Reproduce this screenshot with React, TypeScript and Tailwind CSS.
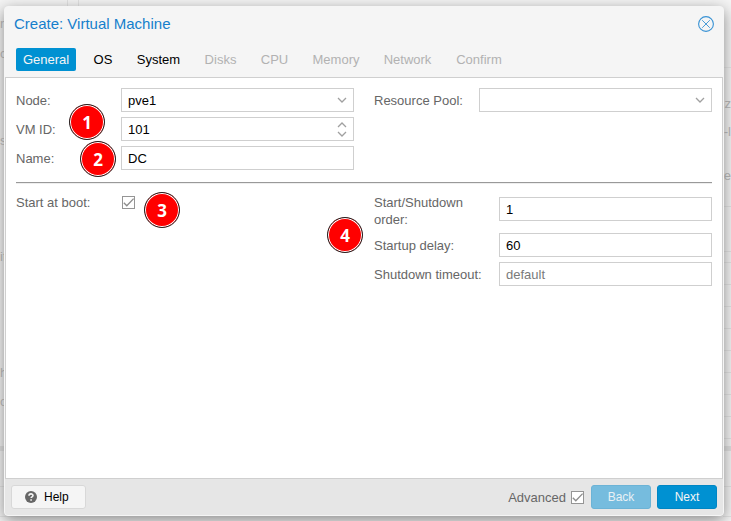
import type { ReactNode } from "react";
import { clsx } from "clsx";

const TABS = [
  { label: "General", state: "active", width: "w-[60px]" },
  { label: "OS", state: "enabled", width: "w-8" },
  { label: "System", state: "enabled", width: "w-[57px]" },
  { label: "Disks", state: "disabled", width: "w-[45px]" },
  { label: "CPU", state: "disabled", width: "w-[41px]" },
  { label: "Memory", state: "disabled", width: "w-[60px]" },
  { label: "Network", state: "disabled", width: "w-[61px]" },
  { label: "Confirm", state: "disabled", width: "w-[60px]" },
];

const FIELD = "h-6 w-full rounded-none border border-[#cfcfcf] bg-white px-1.5 text-[13px] text-black outline-none placeholder:text-[#7a7a7a]";

function Field({
  id,
  label,
  wide,
  children,
}: {
  id: string;
  label: string;
  wide?: boolean;
  children: ReactNode;
}) {
  return (
    <div className="flex items-center">
      <label
        htmlFor={id}
        className={clsx("shrink-0 self-start pt-1 leading-[17px] text-[#666]", wide ? "w-[125px] pr-3" : "w-[105px]")}
      >
        {label}
      </label>
      <div className="relative flex min-w-0 grow items-center">{children}</div>
    </div>
  );
}

function Chevron({ up }: { up?: boolean }) {
  return (
    <svg width="10" height="6" viewBox="0 0 10 6" fill="none" stroke="#a0a0a0" strokeWidth="1.3" aria-hidden="true">
      <path d={up ? "M1 5 L5 1 L9 5" : "M1 1 L5 5 L9 1"} />
    </svg>
  );
}

function SelectBox({ id, value }: { id: string; value: string }) {
  return (
    <>
      <select id={id} defaultValue={value} className={clsx(FIELD, "appearance-none pt-px")}>
        <option value={value}>{value}</option>
      </select>
      <span className="pointer-events-none absolute right-[7px]">
        <Chevron />
      </span>
    </>
  );
}

function CheckBox({ id }: { id: string }) {
  return (
    <span className="relative flex size-[13px]">
      <input
        id={id}
        type="checkbox"
        defaultChecked
        className="peer size-[13px] appearance-none border border-[#959595] bg-white"
      />
      <svg
        className="pointer-events-none absolute inset-0 hidden peer-checked:block"
        width="13"
        height="13"
        viewBox="0 0 13 13"
        fill="none"
        stroke="#8c8c8c"
        strokeWidth="1.3"
        aria-hidden="true"
      >
        <path d="M1.8 6.8 L4.8 9.8 L11.6 2.6" />
      </svg>
    </span>
  );
}

function Marker({ value, className }: { value: number; className: string }) {
  return (
    <span
      className={clsx(
        "absolute flex size-9 items-center justify-center rounded-full border border-[#222] bg-[#f00] font-['Noto_Sans',sans-serif] text-[17px] leading-none font-bold text-white shadow-[inset_0_0_0_1px_#fff]",
        className,
      )}
    >
      {value}
    </span>
  );
}

// Slice of the page behind the dialog: text rows and grid lines.
function EdgeRow({ className, children }: { className: string; children?: ReactNode }) {
  return <div className={clsx("flex items-center whitespace-nowrap", className)}>{children}</div>;
}

function Backdrop() {
  return (
    <div className="absolute inset-0 flex justify-between overflow-hidden bg-[#f5f5f5] text-[13px] text-[#b0b0b0]" aria-hidden="true">
      <div className="w-20">
        <EdgeRow className="h-[14px] w-[79px] border-r border-[#e2e2e2]">
          <span className="ml-[67px] h-full border-l border-[#e2e2e2]" />
        </EdgeRow>
        <EdgeRow className="h-5">rl</EdgeRow>
        <EdgeRow className="h-10">ca</EdgeRow>
        <EdgeRow className="mt-[57px] h-5">s</EdgeRow>
        <EdgeRow className="mt-24 h-5">it</EdgeRow>
        <EdgeRow className="mt-24 h-5">h</EdgeRow>
        <EdgeRow className="mt-[9px] h-5">or</EdgeRow>
        <EdgeRow className="mt-[34px] h-[5px] bg-[#dedede]" />
        <EdgeRow className="h-9 border-b border-[#e2e2e2]" />
        <EdgeRow className="h-[30px] border-b border-[#e2e2e2]" />
      </div>
      <div className="w-2">
        <EdgeRow className="h-[68px] border-b border-[#e6e6e6]" />
        <EdgeRow className="mt-[26px] h-5 justify-end">z</EdgeRow>
        <EdgeRow className="mt-2 h-5 justify-end">-l</EdgeRow>
        <EdgeRow className="mt-6 h-5 justify-end">e</EdgeRow>
        <EdgeRow className="h-[21px] border-b border-[#e2e2e2]" />
        <EdgeRow className="h-[45px] border-b border-[#e2e2e2]" />
        <EdgeRow className="h-[11px] border-b border-[#e2e2e2]" />
        {[0, 1, 2, 3, 4, 5, 6, 7].map((row) => (
          <EdgeRow key={row} className="h-[22px] border-b border-[#e2e2e2]" />
        ))}
        <EdgeRow className="mt-[7px] h-[5px] bg-[#dedede]" />
        <EdgeRow className="h-9 border-b border-[#e2e2e2]" />
        <EdgeRow className="h-[30px] border-b border-[#e2e2e2]" />
      </div>
    </div>
  );
}

export default function App() {
  return (
    <div className="relative flex min-h-screen pt-1.5 pr-[7px] pb-[5px] pl-1 font-['Liberation_Sans',Arial,sans-serif] text-[13px]">
      <Backdrop />

      <section
        role="dialog"
        aria-labelledby="dialog-title"
        className="relative flex min-w-0 grow flex-col rounded-[4px] border border-[#f5f5f5] bg-[#f5f5f5] shadow-[0_4px_15px_#888]"
      >
        <header className="flex h-[34px] items-center justify-between px-[9px]">
          <h1 id="dialog-title" className="text-[15px] leading-5 text-[#157fcc]">
            Create: Virtual Machine
          </h1>
          <button type="button" aria-label="Close" className="text-[#3892d4]">
            <svg width="16" height="16" viewBox="0 0 16 16" fill="none" stroke="currentColor" aria-hidden="true">
              <circle cx="8" cy="8" r="7.4" strokeWidth="1.1" />
              <path d="M4.2 4.2 L11.8 11.8 M11.8 4.2 L4.2 11.8" strokeWidth="0.9" />
            </svg>
          </button>
        </header>

        <nav className="flex gap-[11px] px-[11px] pt-[7px] pb-1.5">
          {TABS.map((tab) => (
            <button
              key={tab.label}
              type="button"
              disabled={tab.state === "disabled"}
              className={clsx(
                "h-[23px] rounded-[2px] text-center leading-[23px]",
                tab.width,
                tab.state === "active" && "bg-[#0091d2] text-[#f5f5f5]",
                tab.state === "enabled" && "text-black",
                tab.state === "disabled" && "text-[#b2b2b2]",
              )}
            >
              {tab.label}
            </button>
          ))}
        </nav>

        <form className="relative grow border border-[#cfcfcf] bg-white p-2.5">
          <div className="grid grid-cols-2 gap-x-5">
            <div className="flex flex-col gap-[5px]">
              <Field id="node" label="Node:">
                <SelectBox id="node" value="pve1" />
              </Field>
              <Field id="vmid" label="VM ID:">
                <input id="vmid" type="text" inputMode="numeric" defaultValue="101" className={FIELD} />
                <span className="absolute right-[7px] flex flex-col gap-[3px]">
                  <button type="button" aria-label="Increase VM ID">
                    <Chevron up />
                  </button>
                  <button type="button" aria-label="Decrease VM ID">
                    <Chevron />
                  </button>
                </span>
              </Field>
              <Field id="name" label="Name:">
                <input id="name" type="text" defaultValue="DC" className={FIELD} />
              </Field>
            </div>
            <div>
              <Field id="pool" label="Resource Pool:">
                <SelectBox id="pool" value="" />
              </Field>
            </div>
          </div>

          <hr className="mt-3 mb-1.5 border-t border-b border-t-[#999] border-b-[#eee]" />

          <div className="grid grid-cols-2 gap-x-5">
            <div>
              <Field id="onboot" label="Start at boot:">
                <span className="flex h-6 items-center pt-px pl-px">
                  <CheckBox id="onboot" />
                </span>
              </Field>
            </div>
            <div className="flex flex-col gap-[5px]">
              <Field id="order" label="Start/Shutdown order:" wide>
                <input id="order" type="text" defaultValue="1" className={FIELD} />
              </Field>
              <Field id="delay" label="Startup delay:" wide>
                <input id="delay" type="text" defaultValue="60" className={FIELD} />
              </Field>
              <Field id="timeout" label="Shutdown timeout:" wide>
                <input id="timeout" type="text" placeholder="default" className={FIELD} />
              </Field>
            </div>
          </div>

          <Marker value={1} className="top-[26px] left-[63px]" />
          <Marker value={2} className="top-[63px] left-[74px]" />
          <Marker value={3} className="top-[114px] left-[138px]" />
          <Marker value={4} className="top-[139px] left-[321px]" />
        </form>

        <footer className="flex items-center justify-between rounded-b-[3px] bg-[#e6e6e6] p-1.5 text-xs">
          <button
            type="button"
            className="flex h-6 items-center gap-[7px] rounded-[3px] border border-[#d8d8d8] bg-[#f5f5f5] pr-4 pl-[13px] text-black"
          >
            <svg width="12" height="12" viewBox="0 0 12 12" fill="none" aria-hidden="true">
              <circle cx="6" cy="6" r="6" fill="#666" />
              <path
                d="M4 4.7 C4 2.4 8 2.3 8 4.5 C8 5.8 6.1 5.8 6.1 7.1 M6.1 8.2 V9.8"
                stroke="#f5f5f5"
                strokeWidth="1.6"
              />
            </svg>
            Help
          </button>
          <div className="flex items-center">
            <label htmlFor="advanced" className="mr-[5px] text-[13px] leading-[17px] text-[#666]">
              Advanced
            </label>
            <CheckBox id="advanced" />
            <button
              type="button"
              disabled
              className="ml-[7px] h-6 w-[60px] rounded-[3px] border border-[#6cb3d6] bg-[#76bcde] text-[#e9f1f5]"
            >
              Back
            </button>
            <button
              type="button"
              className="ml-1.5 h-6 w-[60px] rounded-[3px] border border-[#0086c4] bg-[#0091d2] text-[#f5f5f5]"
            >
              Next
            </button>
          </div>
        </footer>
      </section>
    </div>
  );
}
